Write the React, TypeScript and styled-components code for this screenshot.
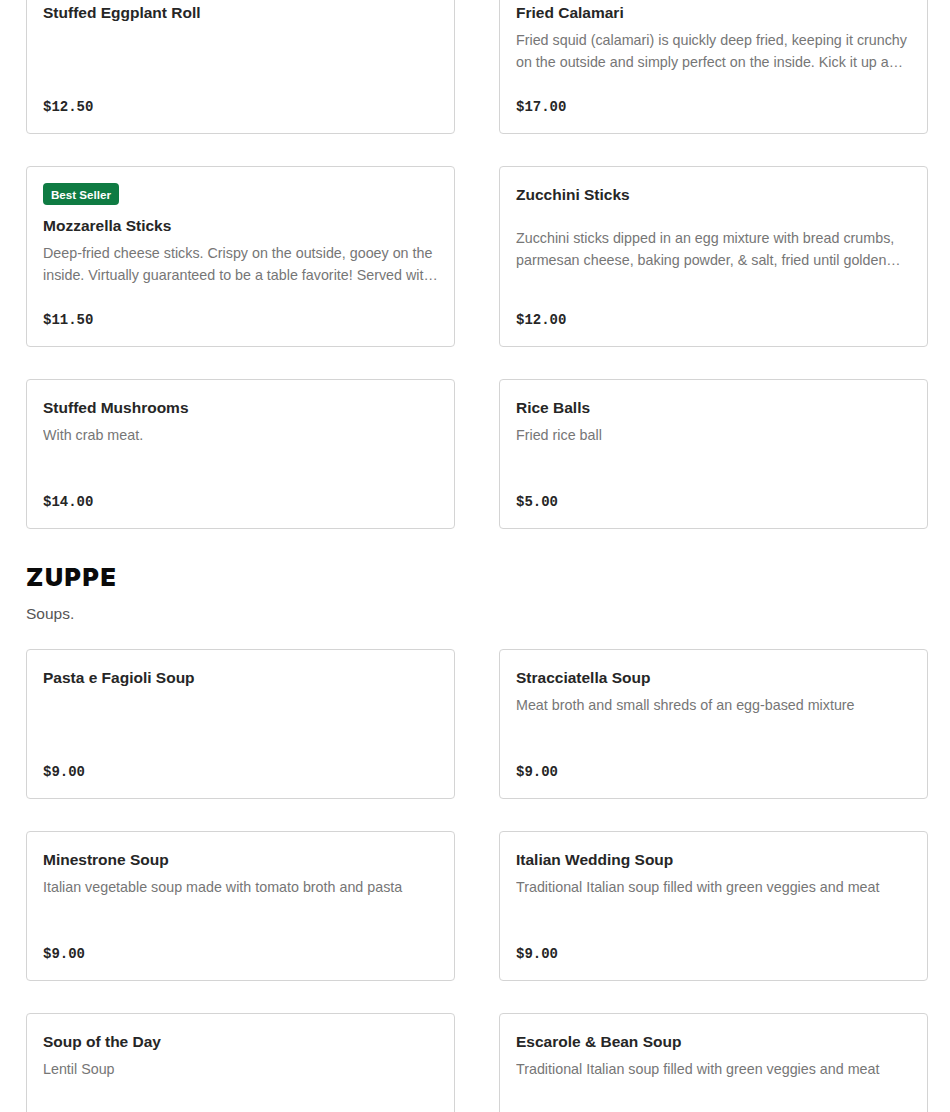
import React from "react";
import styled, { createGlobalStyle } from "styled-components";

const GlobalStyle = createGlobalStyle`
  * {
    box-sizing: border-box;
  }
  body {
    margin: 0;
    background: #ffffff;
    font-family: "Liberation Sans", Arial, sans-serif;
    color: #222;
  }
`;

const Page = styled.div`
  width: 950px;
  padding: 0 22px 40px 26px;
  margin-top: -16px;
`;

const Section = styled.section`
  & + & {
    margin-top: 33px;
  }
`;

const SectionTitle = styled.h2`
  margin: 0;
  font-family: "Inter", "Liberation Sans", sans-serif;
  font-size: 25px;
  line-height: 30px;
  font-weight: 900;
  letter-spacing: 1.6px;
  color: #0a0a0a;
`;

const SectionNote = styled.p`
  margin: 11px 0 24px;
  font-size: 15.5px;
  line-height: 22px;
  color: #555;
`;

const Grid = styled.div`
  display: grid;
  grid-template-columns: 429px 429px;
  column-gap: 44px;
  row-gap: 32px;
`;

const Card = styled.div`
  display: flex;
  flex-direction: column;
  justify-content: space-between;
  border: 1px solid #d4d4d4;
  border-radius: 4px;
  padding: 16px;
  background: #fff;
`;

const Header = styled.div`
  display: flex;
  flex-direction: column;
  align-items: flex-start;
`;

const Badge = styled.span`
  display: inline-flex;
  align-items: center;
  height: 22px;
  padding: 0 8px;
  margin-bottom: 9px;
  border-radius: 4px;
  background: #0f7b43;
  color: #fff;
  font-size: 11.6px;
  font-weight: 700;
`;

const Name = styled.div`
  font-size: 15.5px;
  line-height: 24px;
  font-weight: 700;
  color: #262626;
`;

const Desc = styled.div`
  margin-top: 4px;
  height: 44px;
  font-size: 14.3px;
  line-height: 22px;
  color: #767676;
  display: -webkit-box;
  -webkit-line-clamp: 2;
  -webkit-box-orient: vertical;
  overflow: hidden;
`;

const Price = styled.div`
  margin-top: 24px;
  font-family: "Liberation Mono", "Courier New", monospace;
  font-size: 14px;
  line-height: 20px;
  font-weight: 700;
  color: #262626;
`;

type Item = {
  name: string;
  desc?: string;
  price: string;
  badge?: string;
};

const appetizers: Item[] = [
  { name: "Stuffed Eggplant Roll", price: "$12.50" },
  {
    name: "Fried Calamari",
    desc: "Fried squid (calamari) is quickly deep fried, keeping it crunchy on the outside and simply perfect on the inside. Kick it up a notch with our spicy marinara sauce.",
    price: "$17.00",
  },
  {
    name: "Mozzarella Sticks",
    badge: "Best Seller",
    desc: "Deep-fried cheese sticks. Crispy on the outside, gooey on the inside. Virtually guaranteed to be a table favorite! Served with marinara sauce.",
    price: "$11.50",
  },
  {
    name: "Zucchini Sticks",
    desc: "Zucchini sticks dipped in an egg mixture with bread crumbs, parmesan cheese, baking powder, & salt, fried until golden brown.",
    price: "$12.00",
  },
  { name: "Stuffed Mushrooms", desc: "With crab meat.", price: "$14.00" },
  { name: "Rice Balls", desc: "Fried rice ball", price: "$5.00" },
];

const soups: Item[] = [
  { name: "Pasta e Fagioli Soup", price: "$9.00" },
  {
    name: "Stracciatella Soup",
    desc: "Meat broth and small shreds of an egg-based mixture",
    price: "$9.00",
  },
  {
    name: "Minestrone Soup",
    desc: "Italian vegetable soup made with tomato broth and pasta",
    price: "$9.00",
  },
  {
    name: "Italian Wedding Soup",
    desc: "Traditional Italian soup filled with green veggies and meat",
    price: "$9.00",
  },
  { name: "Soup of the Day", desc: "Lentil Soup", price: "$9.00" },
  {
    name: "Escarole & Bean Soup",
    desc: "Traditional Italian soup filled with green veggies and meat",
    price: "$9.00",
  },
];

const MenuCard: React.FC<{ item: Item }> = ({ item }) => (
  <Card>
    <Header>
      {item.badge && <Badge>{item.badge}</Badge>}
      <Name>{item.name}</Name>
    </Header>
    <Desc>{item.desc}</Desc>
    <Price>{item.price}</Price>
  </Card>
);

export default function App() {
  return (
    <>
      <GlobalStyle />
      <Page>
        <Section>
          <Grid>
            {appetizers.map((item) => (
              <MenuCard key={item.name} item={item} />
            ))}
          </Grid>
        </Section>
        <Section>
          <SectionTitle>ZUPPE</SectionTitle>
          <SectionNote>Soups.</SectionNote>
          <Grid>
            {soups.map((item) => (
              <MenuCard key={item.name} item={item} />
            ))}
          </Grid>
        </Section>
      </Page>
    </>
  );
}
